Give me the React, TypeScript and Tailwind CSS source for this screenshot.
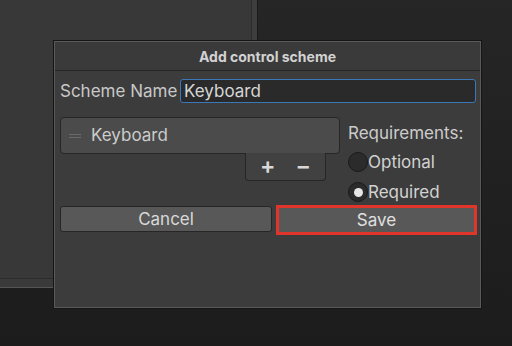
import React from 'react';

const font = { fontFamily: 'Inter, "Noto Sans", sans-serif' };

const Radio: React.FC<{ label: string; checked?: boolean }> = ({ label, checked }) => (
  <div className="flex items-center h-[26px]">
    <div className="w-[20px] h-[20px] rounded-full bg-[#2b2b2b] border border-[#1a1a1a] flex items-center justify-center">
      {checked && <div className="w-[9px] h-[9px] rounded-full bg-[#e6e6e6]" />}
    </div>
    <span className="text-[17px] text-[#d2d2d2] leading-none pt-[1px]">{label}</span>
  </div>
);

export default function App() {
  return (
    <div className="relative w-[512px] h-[346px] overflow-hidden bg-gradient-to-b from-[#262626] to-[#1c1c1c]" style={font}>
      {/* background window */}
      <div className="w-[258px] h-[288px] flex flex-col bg-[#1a1a1a]">
        <div className="flex flex-1">
          <div className="w-[252px] bg-[#383838] border-r border-[#2c2c2c]" />
          <div className="w-[5px] bg-[#3e3e3e]" />
        </div>
        <div className="h-[1px] bg-[#2c2c2c]" />
        <div className="h-[9px] bg-[#3a3a3a] border-b border-[#555555]" />
      </div>

      {/* dialog */}
      <div className="absolute left-[53px] top-[40px] w-[429px] h-[269px] border border-[#151515] bg-[#3c3c3c]">
        <div className="w-full h-full border border-[#5a5a5a] flex flex-col">
          <div className="h-[29px] flex items-center justify-center bg-[#3a3a3a] border-b border-[#262626]">
            <span className="text-[14px] font-bold text-[#d2d2d2]">Add control scheme</span>
          </div>

          <div className="flex flex-col pl-[5px] pr-[3px] pt-[8px]">
            <div className="flex items-center h-[24px]">
              <span className="text-[17px] text-[#c8c8c8] w-[120px] shrink-0 pt-[1px]">Scheme Name</span>
              <div className="flex-1 h-[24px] mr-[1px] rounded-[3px] border border-[#3c78b8] bg-[#2a2a2a] flex items-center px-[3px]">
                <span className="text-[17px] text-[#d6d6d6] pt-[1px]">Keyboard</span>
              </div>
            </div>

            <div className="flex mt-[14px]">
              <div className="w-[280px] flex flex-col">
                <div className="h-[37px] rounded-[4px] border border-[#262626] bg-[#4b4b4b] flex items-center px-[8px]">
                  <div className="flex flex-col gap-[2px] w-[12px]">
                    <div className="h-[1px] bg-[#6a6a6a]" />
                    <div className="h-[1px] bg-[#6a6a6a]" />
                  </div>
                  <span className="ml-[10px] text-[17px] text-[#cccccc]">Keyboard</span>
                </div>
                <div className="self-end mr-[14px] w-[81px] h-[28px] mt-[-1px] rounded-b-[4px] border border-[#262626] border-t-0 bg-[#414141] flex items-center justify-center gap-[20px]">
                  <span className="text-[23px] font-semibold text-[#d8d8d8] leading-none">+</span>
                  <span className="text-[23px] font-semibold text-[#d8d8d8] leading-none">−</span>
                </div>
              </div>
              <div className="flex flex-col ml-[8px] pt-[3px]">
                <span className="text-[17px] text-[#cccccc] h-[26px] leading-[26px]">Requirements:</span>
                <div className="mt-[3px]">
                  <Radio label="Optional" />
                </div>
                <div className="mt-[4px]">
                  <Radio label="Required" checked />
                </div>
              </div>
            </div>

            <div className="flex gap-[4px]">
              <div className="w-[212px] shrink-0 h-[26px] mt-[1px] rounded-[3px] border border-[#262626] bg-[#585858] flex items-center justify-center">
                <span className="text-[17px] text-[#d8d8d8] pt-[1px]">Cancel</span>
              </div>
              <div className="w-[201px] shrink-0 h-[30px] border-[3px] border-[#e0352b] bg-[#585858] flex items-center justify-center">
                <span className="text-[17px] text-[#e0e0e0] pt-[1px]">Save</span>
              </div>
            </div>
          </div>
        </div>
      </div>
    </div>
  );
}
